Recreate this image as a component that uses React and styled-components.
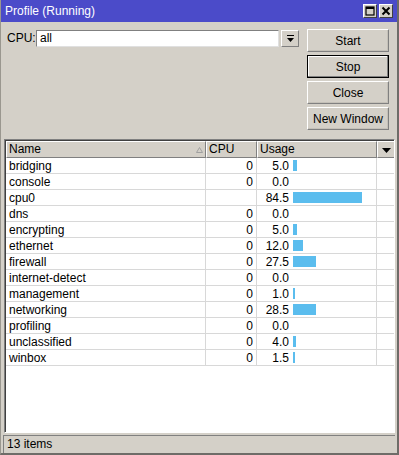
import React from 'react';
import styled, { createGlobalStyle } from 'styled-components';

const Global = createGlobalStyle`
  html, body { margin: 0; padding: 0; background: #d4d0c8; }
  body { font-family: Tahoma, "Liberation Sans", Arial, sans-serif; font-size: 12px; color: #000; }
`;

const Window = styled.div`
  width: 399px;
  height: 455px;
  box-sizing: border-box;
  display: flex;
  flex-direction: column;
  background: #d4d0c8;
  border-left: 1px solid #9a978f;
  border-right: 2px solid #6e6c68;
  border-bottom: 2px solid #6e6c68;
`;

const TitleBar = styled.div`
  height: 22px;
  flex: none;
  background: #4b4bc9;
  color: #fff;
  display: flex;
  align-items: center;
  justify-content: space-between;
  padding: 0 4px 0 4px;
  font-size: 12px;
`;

const TitleButtons = styled.div`
  display: flex;
  gap: 2px;
`;

const TitleButton = styled.div`
  width: 14px;
  height: 14px;
  box-sizing: border-box;
  background: #d4d0c8;
  border: 1px solid #fff;
  border-right-color: #404040;
  border-bottom-color: #404040;
  display: flex;
  align-items: center;
  justify-content: center;
`;

const Top = styled.div`
  display: flex;
  padding: 7px 8px 0 6px;
  height: 110px;
  flex: none;
`;

const CpuRow = styled.div`
  flex: 1;
  display: flex;
  align-items: flex-start;
  padding-top: 1px;
`;

const Label = styled.span`
  width: 29px;
  line-height: 17px;
`;

const Input = styled.div`
  width: 243px;
  height: 17px;
  box-sizing: border-box;
  background: #fff;
  border: 1px solid #808080;
  border-right-color: #e0e0e0;
  border-bottom-color: #e0e0e0;
  padding: 0 3px;
  line-height: 15px;
`;

const DropButton = styled.div`
  width: 18px;
  height: 17px;
  box-sizing: border-box;
  margin-left: 2px;
  border: 1px solid #fff;
  border-right-color: #808080;
  border-bottom-color: #808080;
  display: flex;
  align-items: center;
  justify-content: center;
`;

const ButtonCol = styled.div`
  display: flex;
  flex-direction: column;
  gap: 3px;
  padding-left: 7px;
`;

const Button = styled.div`
  width: 82px;
  height: 23px;
  box-sizing: border-box;
  display: flex;
  align-items: center;
  justify-content: center;
  border: 1px solid ${p => (p.$default ? '#000' : '#fff')};
  border-right-color: ${p => (p.$default ? '#000' : '#808080')};
  border-bottom-color: ${p => (p.$default ? '#000' : '#808080')};
  box-shadow: ${p => (p.$default ? 'inset -1px -1px 0 #808080, inset 1px 1px 0 #fff' : 'inset -1px -1px 0 #c4c0b8')};
`;

const TableBox = styled.div`
  flex: 1;
  margin: 0 2px 0 3px;
  box-sizing: border-box;
  background: #fff;
  border: 1px solid #808080;
  border-right-color: #fff;
  border-bottom-color: #fff;
  box-shadow: inset 1px 1px 0 #404040;
  display: flex;
  flex-direction: column;
  padding: 1px 0 0 1px;
  overflow: hidden;
`;

const Grid = styled.div`
  display: grid;
  grid-template-columns: 200px 51px 120px 18px;
`;

const Head = styled.div`
  height: 17px;
  box-sizing: border-box;
  background: #d4d0c8;
  border-top: 1px solid #fff;
  border-left: 1px solid #fff;
  border-right: 1px solid #808080;
  border-bottom: 1px solid #808080;
  padding: 0 2px;
  line-height: 15px;
  display: flex;
  justify-content: ${p => (p.$center ? 'center' : 'space-between')};
  align-items: center;
`;

const Cell = styled.div`
  height: 16px;
  box-sizing: border-box;
  border-bottom: 1px solid #d8d8d8;
  border-right: 1px solid #d8d8d8;
  line-height: 16px;
  padding: 0 3px;
  text-align: ${p => (p.$right ? 'right' : 'left')};
  white-space: nowrap;
  overflow: hidden;
`;

const UsageCell = styled(Cell)`
  display: flex;
  align-items: center;
  padding: 0;
`;

const UsageNum = styled.span`
  width: 32px;
  text-align: right;
  flex: none;
`;

const Bar = styled.div`
  height: 11px;
  background: #5bbdee;
  margin-left: 4px;
`;

const Filler = styled.div`
  flex: 1;
  display: grid;
  grid-template-columns: 371px 18px;
`;

const FillerCol = styled.div`
  border-right: 1px solid #d8d8d8;
`;

const StatusBar = styled.div`
  height: 18px;
  flex: none;
  margin: 2px 2px 0 2px;
  box-sizing: border-box;
  border-top: 1px solid #808080;
  border-left: 1px solid #808080;
  padding: 0 3px;
  line-height: 16px;
`;

const rows = [
  ['bridging', '0', 5.0],
  ['console', '0', 0.0],
  ['cpu0', '', 84.5],
  ['dns', '0', 0.0],
  ['encrypting', '0', 5.0],
  ['ethernet', '0', 12.0],
  ['firewall', '0', 27.5],
  ['internet-detect', '0', 0.0],
  ['management', '0', 1.0],
  ['networking', '0', 28.5],
  ['profiling', '0', 0.0],
  ['unclassified', '0', 4.0],
  ['winbox', '0', 1.5],
];

const SortArrow = () => (
  <svg width="7" height="6" viewBox="0 0 7 6">
    <path d="M0.5 5.5 L3.5 0.5 L6.5 5.5 Z" fill="none" stroke="#a0a0a0" />
  </svg>
);

const DownArrow = ({ bar }) => (
  <svg width="9" height="8" viewBox="0 0 9 8">
    {bar && <rect x="1" y="0" width="7" height="1" fill="#000" />}
    <path d={bar ? 'M1 3 L8 3 L4.5 7 Z' : 'M0 2 L9 2 L4.5 7 Z'} fill="#000" />
  </svg>
);

export default function App() {
  return (
    <Window>
      <Global />
      <TitleBar>
        <span>Profile (Running)</span>
        <TitleButtons>
          <TitleButton>
            <svg width="10" height="10" viewBox="0 0 10 10">
              <rect x="1" y="1" width="8" height="8" fill="none" stroke="#000" strokeWidth="1.2" />
              <rect x="1" y="1" width="8" height="2" fill="#000" />
            </svg>
          </TitleButton>
          <TitleButton>
            <svg width="10" height="10" viewBox="0 0 10 10">
              <path d="M1.5 1.5 L8.5 8.5 M8.5 1.5 L1.5 8.5" stroke="#000" strokeWidth="2" />
            </svg>
          </TitleButton>
        </TitleButtons>
      </TitleBar>
      <Top>
        <CpuRow>
          <Label>CPU:</Label>
          <Input>all</Input>
          <DropButton>
            <DownArrow bar />
          </DropButton>
        </CpuRow>
        <ButtonCol>
          <Button>Start</Button>
          <Button $default>Stop</Button>
          <Button>Close</Button>
          <Button>New Window</Button>
        </ButtonCol>
      </Top>
      <TableBox>
        <Grid>
          <Head>
            <span>Name</span>
            <SortArrow />
          </Head>
          <Head>CPU</Head>
          <Head>Usage</Head>
          <Head $center>
            <DownArrow />
          </Head>
          {rows.map(([name, cpu, usage]) => (
            <React.Fragment key={name}>
              <Cell>{name}</Cell>
              <Cell $right>{cpu}</Cell>
              <UsageCell>
                <UsageNum>{usage.toFixed(1)}</UsageNum>
                {usage > 0 && <Bar style={{ width: Math.max(2, Math.round(usage * 0.82)) }} />}
              </UsageCell>
              <Cell />
            </React.Fragment>
          ))}
        </Grid>
        <Filler>
          <div />
          <FillerCol />
        </Filler>
      </TableBox>
      <StatusBar>13 items</StatusBar>
    </Window>
  );
}
